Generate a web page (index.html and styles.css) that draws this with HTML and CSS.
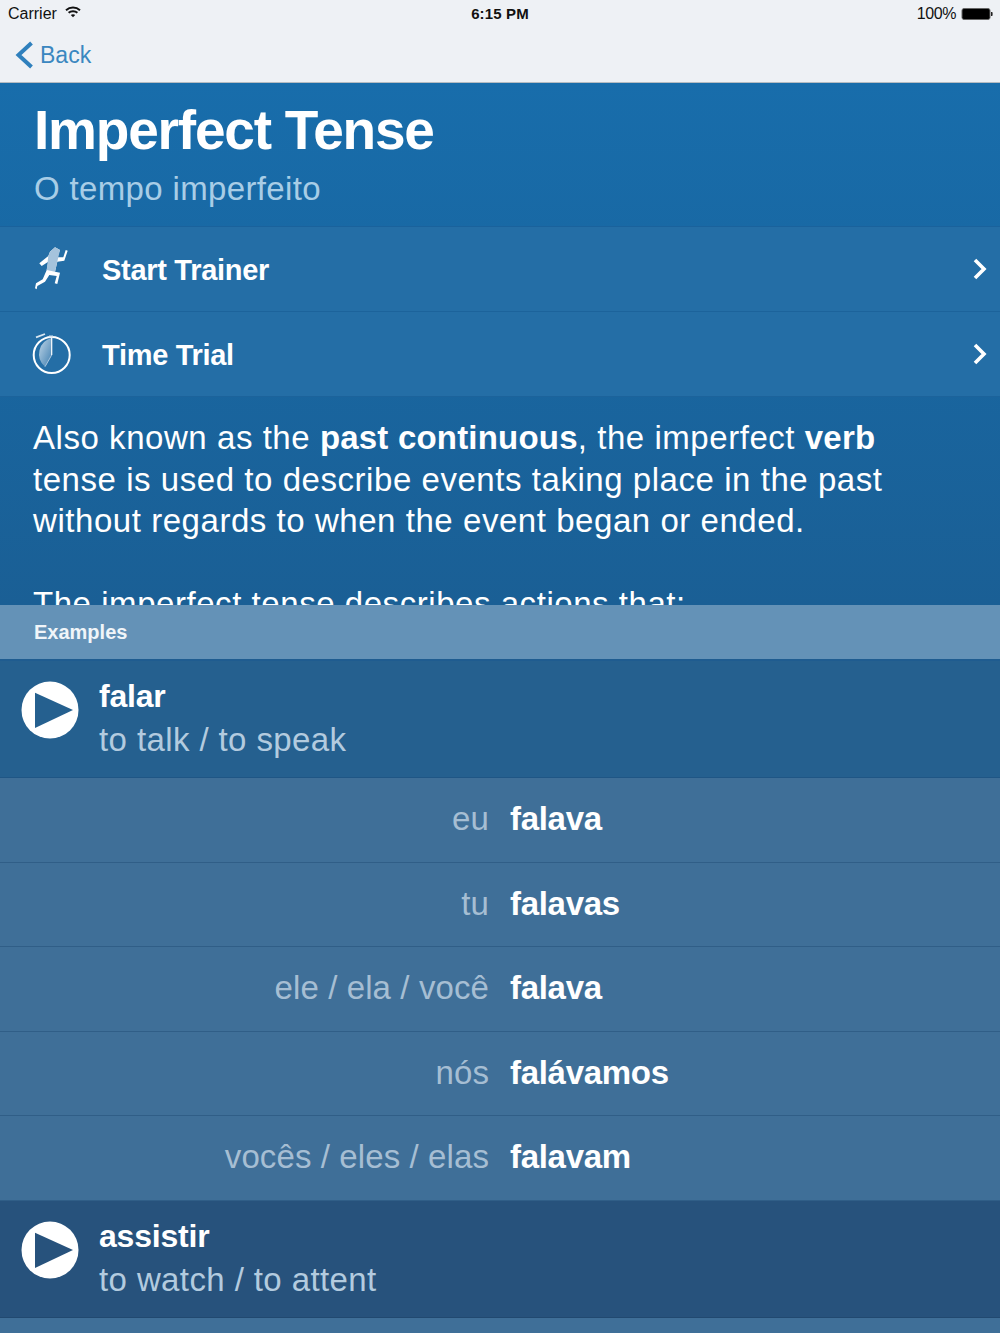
FILE: index.html
```html
<!DOCTYPE html>
<html lang="en">
<head>
    <meta charset="utf-8"/>
    <title>Imperfect Tense</title>
    <link rel="stylesheet" href="styles.css">
</head>
<body>
<div class="screen">
    <div class="top_bar">
        <div class="status_bar">
            <div class="status_left">
                <span>Carrier</span>
                <svg class="wifi" width="16" height="12" viewBox="0 0 16 12">
                    <path d="M1 4.200C5 .6 11 .6 15 4.200" fill="none" stroke="#111" stroke-width="2"/>
                    <path d="M3.600 6.800C6 4.700 10 4.700 12.400 6.800" fill="none" stroke="#111" stroke-width="2"/>
                    <path d="M5.800 9.100 8 11.200l2.200-2.100C9 8 7 8 5.800 9.100z" fill="#111"/>
                </svg>
            </div>
            <div class="status_time">6:15 PM</div>
            <div class="status_right">
                <span>100%</span>
                <svg width="32" height="14" viewBox="0 0 32 14">
                    <rect x="1" y="1.500" width="28" height="11" rx="2" fill="#000" stroke="#666" stroke-width="1"/>
                    <path d="M30 5h.8a.8.8 0 0 1 .8.8v2.400a.8.8 0 0 1-.8.8H30z" fill="#222"/>
                </svg>
            </div>
        </div>
        <div class="nav_bar">
            <svg class="back_icon" width="18" height="28" viewBox="0 0 18 28">
                <path d="M16.500 2 3.500 14l13 12" fill="none" stroke="#2f80bd" stroke-width="4"/>
            </svg>
            <span class="back_text">Back</span>
        </div>
    </div>

    <div class="lesson">
        <div class="lesson_head">
            <h1 class="lesson_title">Imperfect Tense</h1>
            <div class="lesson_sub">O tempo imperfeito</div>
        </div>
        <div class="action_row">
            <svg class="action_icon" width="40" height="48" viewBox="0 -1 40 48">
                <path d="M23 1.300 28 4l-2.700 7.300h6l2.400-7.300 2 .7-3.400 10-7 1-2.300 10 5 1-2.700 11.300-2.600-.7 2-7.300-7.400-1L13 35.700 5.300 40l-.6 3.300-1.700-1 1-5 6.700-4 4-9.300 1.600-8.300-6.600 4.300-2.400-2.700 9-7.300L18 5.700z" fill="#fff"/>
                <path d="M23 1.300 28 4l-2.700 11.700L23 25.700 14.700 24l1.600-14L18 5.700z" fill="#a5c3dc"/>
            </svg>
            <span class="action_text">Start Trainer</span>
            <svg class="chevron" width="16" height="22" viewBox="0 0 16 22">
                <path d="M3 2l9 9-9 9" fill="none" stroke="#fff" stroke-width="3.600"/>
            </svg>
        </div>
        <div class="action_row">
            <svg class="action_icon" width="40" height="48" viewBox="0 0 40 48">
                <defs>
                    <linearGradient id="dial" x1="0" y1="0" x2="1" y2="1">
                        <stop offset="0" stop-color="#c0d6e8"/>
                        <stop offset="1" stop-color="#3f7fb0"/>
                    </linearGradient>
                </defs>
                <path d="M19.700 8v17L13 36.700A16.500 16.500 0 0 1 19.700 8z" fill="url(#dial)"/>
                <path d="M19.700 8v17" stroke="#fff" stroke-width="1.200"/>
                <path d="M19.700 25 13 36.700" stroke="#a9c6de" stroke-width="1"/>
                <circle cx="19.700" cy="25" r="18" fill="none" stroke="#fff" stroke-width="2"/>
                <path d="M4 7.300l9-3.300M17 6.500h4" stroke="#d8e6f1" stroke-width="1.800"/>
            </svg>
            <span class="action_text">Time Trial</span>
            <svg class="chevron" width="16" height="22" viewBox="0 0 16 22">
                <path d="M3 2l9 9-9 9" fill="none" stroke="#fff" stroke-width="3.600"/>
            </svg>
        </div>
        <div class="lesson_desc">
            <p>Also known as the <b>past continuous</b>, the imperfect <b>verb</b> tense is used to describe events taking place in the past without regards to when the event began or ended.</p>
            <p>The imperfect tense describes actions that:</p>
        </div>
    </div>

    <div class="examples_head">Examples</div>

    <div class="verb_row">
        <svg class="play" width="58" height="58" viewBox="0 0 58 58">
            <circle cx="29" cy="29" r="28.500" fill="#fff"/>
            <path d="M14 11.700 52 29 14 47z" fill="#25608f"/>
        </svg>
        <div>
            <div class="verb_name">falar</div>
            <div class="verb_meaning">to talk / to speak</div>
        </div>
    </div>
    <div class="conj_row"><span class="pronoun">eu</span><span class="conj">falava</span></div>
    <div class="conj_row"><span class="pronoun">tu</span><span class="conj">falavas</span></div>
    <div class="conj_row"><span class="pronoun">ele / ela / você</span><span class="conj">falava</span></div>
    <div class="conj_row"><span class="pronoun">nós</span><span class="conj">falávamos</span></div>
    <div class="conj_row"><span class="pronoun">vocês / eles / elas</span><span class="conj">falavam</span></div>
    <div class="verb_row verb_row_dark">
        <svg class="play" width="58" height="58" viewBox="0 0 58 58">
            <circle cx="29" cy="29" r="28.500" fill="#fff"/>
            <path d="M14 11.700 52 29 14 47z" fill="#27527c"/>
        </svg>
        <div>
            <div class="verb_name">assistir</div>
            <div class="verb_meaning">to watch / to attent</div>
        </div>
    </div>
    <div class="conj_row"></div>
</div>
</body>
</html>
```

FILE: styles.css
```css
* {
    box-sizing: border-box;
}

html, body {
    margin: 0;
    padding: 0;
}

body {
    font-family: "Liberation Sans", Arial, sans-serif;
}

.screen {
    width: 1000px;
    height: 1333px;
    overflow: hidden;
    background: #3f6b91;
}

.top_bar {
    height: 83px;
    background: #eef1f5;
    border-bottom: 1px solid #b5bcc2;
}

.status_bar {
    display: grid;
    grid-template-columns: 1fr auto 1fr;
    align-items: center;
    height: 27px;
    padding: 0 8px;
    font-size: 16px;
    color: #111;
}

.status_left {
    display: flex;
    align-items: center;
    gap: 8px;
}

.wifi {
    margin-top: -3px;
}

.status_time {
    font-weight: bold;
    font-size: 15px;
    letter-spacing: 0.15px;
}

.status_right {
    display: flex;
    align-items: center;
    justify-content: flex-end;
    gap: 5px;
    margin-right: -1px;
    letter-spacing: -0.4px;
}

.nav_bar {
    display: flex;
    align-items: center;
    gap: 7px;
    height: 55px;
    padding-left: 15px;
}

.back_text {
    margin-top: 2px;
    font-size: 23px;
    color: #3a87c0;
}

.lesson {
    height: 522px;
    overflow: hidden;
    background: linear-gradient(#186dab, #1a5f95);
}

.lesson_head {
    height: 144px;
    padding: 16px 34px 0;
    border-bottom: 1px solid #1a629c;
}

.lesson_title {
    margin: 0;
    font-size: 55px;
    line-height: 62px;
    font-weight: bold;
    color: #fff;
    letter-spacing: -1.2px;
}

.lesson_sub {
    margin-top: 8px;
    font-size: 33px;
    line-height: 40px;
    letter-spacing: 0.35px;
    color: #a8cde6;
}

.action_row {
    display: flex;
    align-items: center;
    height: 85px;
    padding: 0 12px 0 32px;
    background: #246ea6;
    border-bottom: 1px solid #1c639b;
}

.action_icon {
    flex: none;
    margin-right: 30px;
}

.action_text {
    flex: 1;
    margin-top: 2px;
    font-size: 29px;
    font-weight: bold;
    letter-spacing: -0.3px;
    color: #fff;
}

.lesson_desc {
    padding: 20px 33px 0;
    font-size: 33px;
    line-height: 41.500px;
    letter-spacing: 0.55px;
    color: #fff;
}

.lesson_desc b {
    letter-spacing: 0.2px;
}

.lesson_desc p {
    margin: 0 0 41px;
}

.examples_head {
    height: 56px;
    padding: 16px 34px 0;
    font-size: 20px;
    font-weight: bold;
    color: #f0f5f9;
    background: #6492b7;
    border-bottom: 2px solid #1f5c90;
}

.verb_row {
    display: flex;
    align-items: flex-start;
    height: 117px;
    padding: 20px 0 0 21px;
    gap: 20px;
    background: #25608f;
    border-bottom: 1px solid #1f5685;
}

.verb_row_dark {
    background: #27527c;
    border-bottom-color: #214970;
}

.verb_name {
    margin-top: -6px;
    margin-bottom: 1px;
    font-size: 32px;
    line-height: 42px;
    font-weight: bold;
    letter-spacing: -0.2px;
    color: #fff;
}

.verb_meaning {
    font-size: 33px;
    line-height: 44px;
    letter-spacing: 0.4px;
    color: #b3cbdf;
}

.conj_row {
    display: grid;
    grid-template-columns: 489px 1fr;
    column-gap: 21px;
    align-items: center;
    height: 84.500px;
    padding-bottom: 1px;
    background: #3f6f98;
    border-bottom: 1px solid #305e87;
    font-size: 33px;
}

.pronoun {
    text-align: right;
    letter-spacing: 0.1px;
    color: #a6bed3;
}

.conj {
    font-weight: bold;
    letter-spacing: -0.3px;
    color: #fff;
}
```
